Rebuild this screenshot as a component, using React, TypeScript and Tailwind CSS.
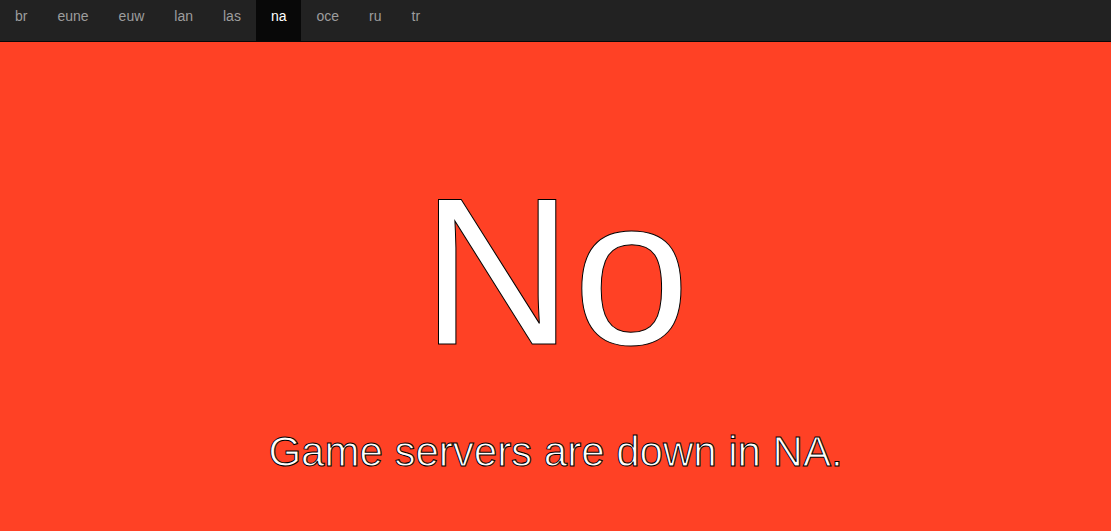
const regions = ["br", "eune", "euw", "lan", "las", "na", "oce", "ru", "tr"];
const active = "na";

export default function App() {
  return (
    <div className="flex min-h-screen flex-col bg-[#ff4125] font-['Liberation_Sans',Arial,sans-serif]">
      <nav aria-label="Regions" className="border-b border-[#080808] bg-[#222222]">
        <ul className="flex flex-wrap text-sm leading-5">
          {regions.map((region) => (
            <li key={region}>
              <a
                href={`#${region}`}
                aria-current={region === active ? "page" : undefined}
                className={
                  region === active
                    ? "block bg-[#080808] px-[15px] pt-[6px] pb-[15px] text-white"
                    : "block px-[15px] pt-[6px] pb-[15px] text-[#9d9d9d] focus-visible:text-white"
                }
              >
                {region}
              </a>
            </li>
          ))}
        </ul>
      </nav>
      <main className="flex flex-1 flex-col items-center pt-[110px] text-center text-white">
        <h1 className="text-[210px] leading-[240px] [-webkit-text-stroke:1px_black]">No</h1>
        <p className="mt-[36px] text-[42px] leading-[48px] [-webkit-text-stroke:1px_black]">
          Game servers are down in NA.
        </p>
      </main>
    </div>
  );
}
